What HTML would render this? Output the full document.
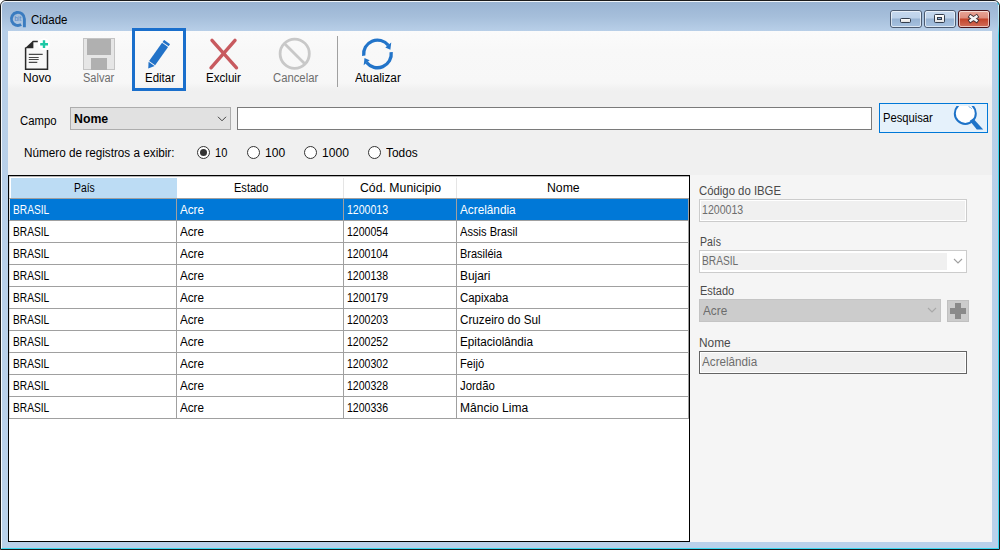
<!DOCTYPE html>
<html><head><meta charset="utf-8">
<style>
*{box-sizing:border-box;margin:0;padding:0}
html,body{width:1000px;height:550px;overflow:hidden;background:#fff}
body{position:relative;font-family:"Liberation Sans",sans-serif;font-size:12px;color:#000}
.a{position:absolute}
.t{position:absolute;transform-origin:0 0;font-size:12px;line-height:14px;white-space:nowrap}
.c{text-align:center;width:100px}
#frame{left:0;top:0;width:1000px;height:550px;border:1px solid #1b1b1b;border-radius:6px 6px 0 0;
 background:linear-gradient(#99b3d2 0px,#a6bfdb 16px,#b8cfe8 30px,#b9d1ea 550px)}
#hl{left:1px;top:1px;width:998px;height:548px;border:1px solid rgba(255,255,255,.85);border-radius:5px 5px 0 0;border-bottom-color:#38d8f0;border-right-color:#38d8f0}
#client{left:8px;top:31px;width:984px;height:511px;background:#f0f0f0;overflow:hidden}
#toolbar{left:0;top:0;width:984px;height:61px;background:linear-gradient(#fbfbfb 0,#f8f8f8 20px,#f7f7f7 52px,#f2f2f2 57px,#f0f0f0 61px)}
.cap{top:10px;width:32px;height:18px;border:1px solid #4b5a70;border-radius:3px;
 background:linear-gradient(#c5d8ee 0,#bdd2ea 7px,#97b3d3 8px,#a9c4e2 17px)}
.cap::after{content:"";position:absolute;left:0;top:0;right:0;bottom:0;border:1px solid rgba(255,255,255,.6);border-radius:2px}
</style></head><body>
<div id="frame" class="a"></div>
<div id="hl" class="a"></div>
<div class="a" style="left:998px;top:5px;width:1px;height:30px;background:linear-gradient(#d4f2fa,#9ee6f6 20px,#38d8f0)"></div>

<!-- title icon -->
<svg class="a" style="left:8px;top:8px" width="22" height="22" viewBox="0 0 22 22">
 <path d="M16.4 19.2 V10.9 A6.5 6.5 0 1 0 13.2 16.5" fill="none" stroke="#3a7cc0" stroke-width="2.9"/>
 <text x="9.9" y="13" font-family="Liberation Sans" font-size="6.5" fill="#4f86c6" text-anchor="middle">bit</text>
</svg>

<!-- caption buttons -->
<div class="a cap" style="left:890px"></div>
<div class="a cap" style="left:924px"></div>
<div class="a cap" style="left:958px;border-color:#4a1218;background:linear-gradient(#e8a597 0,#de8c7c 7px,#c3432a 8px,#d37461 17px)"></div>

<div class="a" style="left:900px;top:18px;width:11px;height:5px;border:1px solid #333d4c;border-radius:1.5px;background:linear-gradient(#fff,#e0e0e0)"></div>
<div class="a" style="left:934px;top:14px;width:11px;height:9px;border:1px solid #333d4c;border-radius:1.5px;background:linear-gradient(#fff,#e4e4e4)"></div>
<div class="a" style="left:937px;top:17px;width:5px;height:3px;border:1px solid #333d4c;background:#8fb0d8"></div>
<svg class="a" style="left:966px;top:12px" width="15" height="13" viewBox="0 0 15 13">
 <path d="M4.6 4.6 L10.4 8.5 M10.4 4.6 L4.6 8.5" stroke="#3a2a30" stroke-width="4.2" stroke-linecap="square"/>
 <path d="M4.6 4.6 L10.4 8.5 M10.4 4.6 L4.6 8.5" stroke="#f4f4f4" stroke-width="2.5" stroke-linecap="square"/>
</svg>

<div id="client" class="a">
 <div id="toolbar" class="a"></div>
</div>


<!-- right panel bg -->
<div class="a" style="left:690px;top:175px;width:302px;height:367px;background:#f5f5f5"></div>
<div class="a" style="left:8px;top:92px;width:984px;height:83px;background:#f0f0f0"></div>

<!-- toolbar icons -->
<svg class="a" style="left:20px;top:36px" width="36" height="40" viewBox="0 0 36 40">
 <path d="M12.7 5.5 H17.8 M5.6 11.6 V33.2 H27.5 V14" fill="none" stroke="#2a2a2a" stroke-width="1.5"/>
 <path d="M4.9 12.3 L12.7 5 L13.4 5 L13.4 12.3 Z" fill="#2a2a2a"/>
 <path d="M8.8 18.4 H22.7 M8.8 21.5 H18.7 M8.8 23.5 H18.7 M8.8 26.4 H17.3" stroke="#4a4a4a" stroke-width="1.2"/>
 <circle cx="24" cy="8.2" r="6" fill="#fff"/>
 <path d="M24 4.3 V12 M20.2 8.2 H28" stroke="#1ec8a5" stroke-width="2.4"/>
</svg>
<svg class="a" style="left:83px;top:38px" width="32" height="32" viewBox="0 0 32 32">
 <rect x="0.5" y="0.5" width="31" height="31" fill="#e6e6e6" stroke="#c4c4c4"/>
 <rect x="4" y="1" width="24" height="16" fill="#b0b0b0"/>
 <rect x="8" y="20" width="16" height="12" fill="#b0b0b0"/>
</svg>
<div class="a" style="left:132px;top:28px;width:54px;height:63px;border:3px solid #1a6fcc"></div>
<svg class="a" style="left:140px;top:35px" width="40" height="40" viewBox="0 0 40 40">
 <g transform="rotate(35.3 17.75 20.15)" fill="#2272c8">
  <rect x="14.05" y="4.1" width="7.4" height="2.5" rx="0.3"/>
  <rect x="14.05" y="7.5" width="7.4" height="22.4"/>
  <path d="M14.05 30.8 H21.45 L17.75 36.6 Z"/>
 </g>
</svg>
<svg class="a" style="left:200px;top:34px" width="50" height="40" viewBox="0 0 50 40">
 <path d="M12 6.3 L36.5 33.8 M35 6.3 L11 33.8" stroke="#c85a5f" stroke-width="3.4" stroke-linecap="round"/>
</svg>
<svg class="a" style="left:275px;top:34px" width="40" height="40" viewBox="0 0 40 40">
 <circle cx="19.7" cy="19.7" r="14.6" fill="none" stroke="#c8c8c8" stroke-width="2.8"/>
 <path d="M9.4 9.4 L30 30" stroke="#c8c8c8" stroke-width="2.8"/>
</svg>
<div class="a" style="left:337px;top:36px;width:1px;height:51px;background:#a0a0a0"></div>
<svg class="a" style="left:357px;top:34px" width="40" height="40" viewBox="0 0 40 40">
 <path d="M6.72 21.68 A13.85 13.85 0 0 1 31.30 11.30" fill="none" stroke="#2274c9" stroke-width="3.3"/>
 <path d="M28.29 13.46 L34.24 8.57 L33.38 15.85 Z" fill="#2274c9"/>
 <path d="M34.18 18.12 A13.85 13.85 0 0 1 9.60 28.50" fill="none" stroke="#2274c9" stroke-width="3.3"/>
 <path d="M12.61 26.34 L6.66 31.23 L7.52 23.95 Z" fill="#2274c9"/>
</svg>

<!-- filter row -->
<div class="a" style="left:70px;top:107px;width:161px;height:23px;background:#e1e1e1;border:1px solid #adadad"></div>
<svg class="a" style="left:217px;top:116px" width="10" height="7" viewBox="0 0 10 7"><path d="M1 0.8 L5 4.8 L9 0.8" fill="none" stroke="#404040" stroke-width="1"/></svg>
<div class="a" style="left:237px;top:107px;width:635px;height:23px;background:#fff;border:1px solid #7a7a7a"></div>
<div class="a" style="left:879px;top:103px;width:109px;height:30px;background:#e5f1fb;border:1px solid #0078d7"></div>
<div class="a" style="left:940px;top:106px;width:47px;height:26px;overflow:hidden">
 <svg class="a" style="left:0;top:0" width="47" height="26" viewBox="0 0 47 26">
  <circle cx="25.3" cy="7.4" r="10.5" fill="#fff" stroke="#1e73c8" stroke-width="2"/>
  <path d="M29.8 14.8 L33.2 12.6 L43.2 23.6 L36.8 23.6 Z" fill="#1e73c8"/>
  <path d="M28.6 0.6 Q30.6 1.2 31.8 2.8" fill="none" stroke="#7fb0e2" stroke-width="1"/>
 </svg>
</div>

<svg class="a" style="left:196px;top:145px" width="200" height="16" viewBox="0 0 200 16">
 <circle cx="7.5" cy="7.5" r="6" fill="#fff" stroke="#333" stroke-width="1"/>
 <circle cx="7.5" cy="7.5" r="3.5" fill="#333"/>
 <circle cx="57.5" cy="7.5" r="6" fill="#fff" stroke="#333" stroke-width="1"/>
 <circle cx="114.5" cy="7.5" r="6" fill="#fff" stroke="#333" stroke-width="1"/>
 <circle cx="178.5" cy="7.5" r="6" fill="#fff" stroke="#333" stroke-width="1"/>
</svg>

<!-- grid -->
<div class="a" style="left:8px;top:175px;width:682px;height:367px;background:#fff;border:1px solid #000"></div>
<div class="a" style="left:11px;top:178px;width:166px;height:20px;background:#bcdcf4"></div>
<div class="a" style="left:343px;top:178px;width:1px;height:20px;background:#e5e5e5"></div>
<div class="a" style="left:456px;top:178px;width:1px;height:20px;background:#e5e5e5"></div>
<div class="a" style="left:9px;top:176px;width:680px;height:1px;background:#b4b4b4"></div>
<div class="a" style="left:9px;top:177px;width:1px;height:241px;background:#dedede"></div>
<div class="a" style="left:9px;top:198px;width:680px;height:1px;background:#a0a0a0"></div>
<div class="a" style="left:10px;top:199px;width:678px;height:21px;background:#0078d7"></div>
<div class="a" style="left:9px;top:220px;width:680px;height:1px;background:#a0a0a0"></div>
<div class="a" style="left:9px;top:242px;width:680px;height:1px;background:#a0a0a0"></div>
<div class="a" style="left:9px;top:264px;width:680px;height:1px;background:#a0a0a0"></div>
<div class="a" style="left:9px;top:286px;width:680px;height:1px;background:#a0a0a0"></div>
<div class="a" style="left:9px;top:308px;width:680px;height:1px;background:#a0a0a0"></div>
<div class="a" style="left:9px;top:330px;width:680px;height:1px;background:#a0a0a0"></div>
<div class="a" style="left:9px;top:352px;width:680px;height:1px;background:#a0a0a0"></div>
<div class="a" style="left:9px;top:374px;width:680px;height:1px;background:#a0a0a0"></div>
<div class="a" style="left:9px;top:396px;width:680px;height:1px;background:#a0a0a0"></div>
<div class="a" style="left:9px;top:418px;width:680px;height:1px;background:#a0a0a0"></div>
<div class="a" style="left:176px;top:198px;width:1px;height:221px;background:#a0a0a0"></div>
<div class="a" style="left:343px;top:198px;width:1px;height:221px;background:#a0a0a0"></div>
<div class="a" style="left:456px;top:198px;width:1px;height:221px;background:#a0a0a0"></div>
<div class="a" style="left:688px;top:198px;width:1px;height:221px;background:#a0a0a0"></div>
<div class="a" style="left:699px;top:199px;width:268px;height:23px;background:#f0f0f0;border:1px solid #cccccc;box-shadow:inset 0 0 0 1px #fff"></div>
<div class="a" style="left:699px;top:250px;width:268px;height:23px;background:#fff;border:1px solid #cccccc"></div>
<div class="a" style="left:702px;top:253px;width:245px;height:17px;background:#f0f0f0"></div>
<svg class="a" style="left:953px;top:258px" width="10" height="7" viewBox="0 0 10 7"><path d="M1 1 L5 5 L9 1" fill="none" stroke="#a0a0a0" stroke-width="1.1"/></svg>
<div class="a" style="left:699px;top:299px;width:242px;height:23px;background:#cccccc;border:1px solid #c4c4c4"></div>
<svg class="a" style="left:927px;top:307px" width="10" height="7" viewBox="0 0 10 7"><path d="M1 1 L5 5 L9 1" fill="none" stroke="#a8a8a8" stroke-width="1.1"/></svg>
<div class="a" style="left:947px;top:300px;width:22px;height:22px;background:#cccccc;border:1px solid #c0c0c0"></div>
<div class="a" style="left:950px;top:308px;width:16px;height:6px;background:#8a8a8a"></div>
<div class="a" style="left:955px;top:303px;width:6px;height:16px;background:#8a8a8a"></div>
<div class="a" style="left:699px;top:351px;width:268px;height:23px;background:#f0f0f0;border:1px solid #646464;box-shadow:inset 0 0 0 1px #fff"></div>

<div class="t" style="left:30.55px;top:13px;color:#000;transform:scaleX(0.9582)">Cidade</div>
<div class="t" style="left:23.30px;top:71px;color:#000;transform:scaleX(1.0057)">Novo</div>
<div class="t" style="left:83.10px;top:71px;color:#6d6d6d;transform:scaleX(0.9172)">Salvar</div>
<div class="t" style="left:145.40px;top:71px;color:#000;transform:scaleX(0.9569)">Editar</div>
<div class="t" style="left:206.30px;top:71px;color:#000;transform:scaleX(0.9664)">Excluir</div>
<div class="t" style="left:273.00px;top:71px;color:#6d6d6d;transform:scaleX(0.9411)">Cancelar</div>
<div class="t" style="left:355.40px;top:71px;color:#000;transform:scaleX(0.9809)">Atualizar</div>
<div class="t" style="left:20.20px;top:114px;color:#000;transform:scaleX(0.9459)">Campo</div>
<div class="t" style="left:74.05px;top:112px;color:#000;transform:scaleX(1.0248);font-weight:bold">Nome</div>
<div class="t" style="left:24.40px;top:146px;color:#000;transform:scaleX(0.9771)">Número de registros a exibir:</div>
<div class="t" style="left:214.70px;top:146px;color:#000;transform:scaleX(0.9215)">10</div>
<div class="t" style="left:264.50px;top:146px;color:#000;transform:scaleX(1.0075)">100</div>
<div class="t" style="left:321.50px;top:146px;color:#000;transform:scaleX(1.0066)">1000</div>
<div class="t" style="left:385.80px;top:146px;color:#000;transform:scaleX(0.9900)">Todos</div>
<div class="t" style="left:883.40px;top:111px;color:#000;transform:scaleX(0.9332)">Pesquisar</div>
<div class="t" style="left:74.30px;top:181px;color:#000;transform:scaleX(0.8642)">País</div>
<div class="t" style="left:234.20px;top:181px;color:#000;transform:scaleX(0.9208)">Estado</div>
<div class="t" style="left:360.30px;top:181px;color:#000;transform:scaleX(1.0226)">Cód. Municipio</div>
<div class="t" style="left:547.30px;top:181px;color:#000;transform:scaleX(1.0205)">Nome</div>
<div class="t" style="left:13.30px;top:203px;color:#fff;transform:scaleX(0.8486)">BRASIL</div>
<div class="t" style="left:180.00px;top:203px;color:#fff;transform:scaleX(0.9720)">Acre</div>
<div class="t" style="left:347.40px;top:203px;color:#fff;transform:scaleX(0.8800)">1200013</div>
<div class="t" style="left:460.40px;top:203px;color:#fff;transform:scaleX(0.9802)">Acrelândia</div>
<div class="t" style="left:13.30px;top:225px;color:#000;transform:scaleX(0.8486)">BRASIL</div>
<div class="t" style="left:180.00px;top:225px;color:#000;transform:scaleX(0.9720)">Acre</div>
<div class="t" style="left:347.40px;top:225px;color:#000;transform:scaleX(0.8800)">1200054</div>
<div class="t" style="left:460.40px;top:225px;color:#000;transform:scaleX(0.9259)">Assis Brasil</div>
<div class="t" style="left:13.30px;top:247px;color:#000;transform:scaleX(0.8486)">BRASIL</div>
<div class="t" style="left:180.00px;top:247px;color:#000;transform:scaleX(0.9720)">Acre</div>
<div class="t" style="left:347.40px;top:247px;color:#000;transform:scaleX(0.8800)">1200104</div>
<div class="t" style="left:460.40px;top:247px;color:#000;transform:scaleX(0.9149)">Brasiléia</div>
<div class="t" style="left:13.30px;top:269px;color:#000;transform:scaleX(0.8486)">BRASIL</div>
<div class="t" style="left:180.00px;top:269px;color:#000;transform:scaleX(0.9720)">Acre</div>
<div class="t" style="left:347.40px;top:269px;color:#000;transform:scaleX(0.8800)">1200138</div>
<div class="t" style="left:460.40px;top:269px;color:#000;transform:scaleX(0.9929)">Bujari</div>
<div class="t" style="left:13.30px;top:291px;color:#000;transform:scaleX(0.8486)">BRASIL</div>
<div class="t" style="left:180.00px;top:291px;color:#000;transform:scaleX(0.9720)">Acre</div>
<div class="t" style="left:347.40px;top:291px;color:#000;transform:scaleX(0.8800)">1200179</div>
<div class="t" style="left:460.40px;top:291px;color:#000;transform:scaleX(0.9524)">Capixaba</div>
<div class="t" style="left:13.30px;top:313px;color:#000;transform:scaleX(0.8486)">BRASIL</div>
<div class="t" style="left:180.00px;top:313px;color:#000;transform:scaleX(0.9720)">Acre</div>
<div class="t" style="left:347.40px;top:313px;color:#000;transform:scaleX(0.8800)">1200203</div>
<div class="t" style="left:460.40px;top:313px;color:#000;transform:scaleX(0.9739)">Cruzeiro do Sul</div>
<div class="t" style="left:13.30px;top:335px;color:#000;transform:scaleX(0.8486)">BRASIL</div>
<div class="t" style="left:180.00px;top:335px;color:#000;transform:scaleX(0.9720)">Acre</div>
<div class="t" style="left:347.40px;top:335px;color:#000;transform:scaleX(0.8800)">1200252</div>
<div class="t" style="left:460.40px;top:335px;color:#000;transform:scaleX(0.9767)">Epitaciolândia</div>
<div class="t" style="left:13.30px;top:357px;color:#000;transform:scaleX(0.8486)">BRASIL</div>
<div class="t" style="left:180.00px;top:357px;color:#000;transform:scaleX(0.9720)">Acre</div>
<div class="t" style="left:347.40px;top:357px;color:#000;transform:scaleX(0.8800)">1200302</div>
<div class="t" style="left:460.40px;top:357px;color:#000;transform:scaleX(0.9303)">Feijó</div>
<div class="t" style="left:13.30px;top:379px;color:#000;transform:scaleX(0.8486)">BRASIL</div>
<div class="t" style="left:180.00px;top:379px;color:#000;transform:scaleX(0.9720)">Acre</div>
<div class="t" style="left:347.40px;top:379px;color:#000;transform:scaleX(0.8800)">1200328</div>
<div class="t" style="left:459.80px;top:379px;color:#000;transform:scaleX(0.9482)">Jordão</div>
<div class="t" style="left:13.30px;top:401px;color:#000;transform:scaleX(0.8486)">BRASIL</div>
<div class="t" style="left:180.00px;top:401px;color:#000;transform:scaleX(0.9720)">Acre</div>
<div class="t" style="left:347.40px;top:401px;color:#000;transform:scaleX(0.8800)">1200336</div>
<div class="t" style="left:460.40px;top:401px;color:#000;transform:scaleX(1.0021)">Mâncio Lima</div>
<div class="t" style="left:699.30px;top:184px;color:#4a4a4a;transform:scaleX(0.9456)">Código do IBGE</div>
<div class="t" style="left:702.30px;top:203px;color:#6d6d6d;transform:scaleX(0.8822)">1200013</div>
<div class="t" style="left:700.30px;top:235px;color:#4a4a4a;transform:scaleX(0.8746)">País</div>
<div class="t" style="left:702.30px;top:254px;color:#6d6d6d;transform:scaleX(0.8486)">BRASIL</div>
<div class="t" style="left:700.30px;top:284px;color:#4a4a4a;transform:scaleX(0.9155)">Estado</div>
<div class="t" style="left:702.80px;top:304px;color:#6d6d6d;transform:scaleX(0.9800)">Acre</div>
<div class="t" style="left:699.30px;top:336px;color:#4a4a4a;transform:scaleX(0.9896)">Nome</div>
<div class="t" style="left:702.30px;top:355px;color:#6d6d6d;transform:scaleX(0.9732)">Acrelândia</div>
</body></html>
